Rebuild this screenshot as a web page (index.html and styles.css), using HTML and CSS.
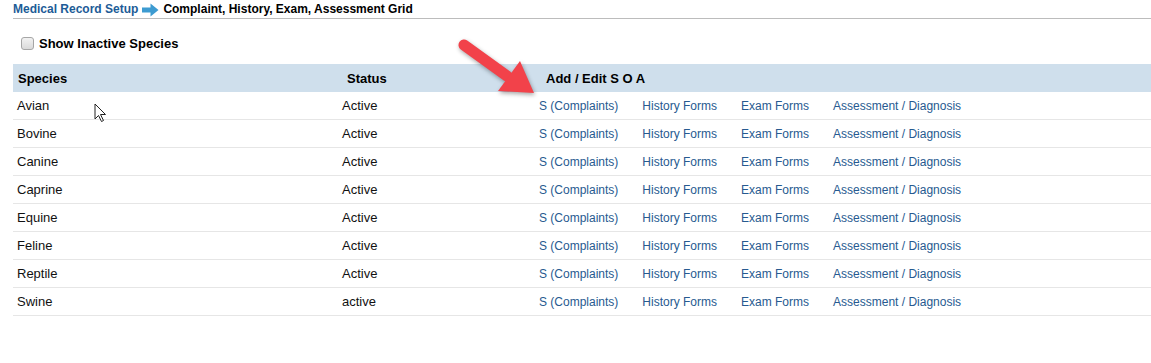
FILE: index.html
```html
<!DOCTYPE html>
<html lang="en">
<head>
  <meta charset="UTF-8" />
  <title>Complaint, History, Exam, Assessment Grid</title>
  <link rel="stylesheet" href="styles.css">
</head>
<body>
  <div class="page">
    <div class="breadcrumb">
      <a href="#" class="crumb-link">Medical Record Setup</a>
      <svg class="crumb-arrow" width="17" height="14" viewBox="0 0 17 14">
        <path d="M0 4.5 H8.5 V0.5 L16.5 7 L8.5 13.5 V9.5 H0 Z" fill="#3d9bd1" />
      </svg>
      <span class="crumb-current">Complaint, History, Exam, Assessment Grid</span>
    </div>

    <div class="options">
      <label class="check-label">
        <input type="checkbox" class="check" />
        Show Inactive Species
      </label>
    </div>

    <table class="grid">
      <colgroup>
        <col class="col-species" />
        <col class="col-status" />
        <col />
      </colgroup>
      <thead>
        <tr>
          <th class="th-species">Species</th>
          <th class="th-status">Status</th>
          <th class="th-soa">Add / Edit S O A</th>
        </tr>
      </thead>
      <tbody id="rows"></tbody>
    </table>
  </div>

  <!-- annotation overlays -->
  <svg class="red-arrow" width="90" height="70" viewBox="0 0 90 70">
    <line x1="7" y1="8" x2="50" y2="39" stroke="#f2424a" stroke-width="11" stroke-linecap="round" />
    <polygon points="41,54 63,24 77,56" fill="#f2424a" />
  </svg>

  <svg class="cursor" width="13" height="20" viewBox="0 0 13 20">
    <path d="M1 1 V16 L4.5 12.5 L7.5 18.5 L9.5 17.5 L6.5 11.5 H11.5 Z" fill="#fff" stroke="#222" stroke-width="1" stroke-linejoin="round" />
  </svg>

  <script>
    const species = [
      ['Avian', 'Active'], ['Bovine', 'Active'], ['Canine', 'Active'], ['Caprine', 'Active'],
      ['Equine', 'Active'], ['Feline', 'Active'], ['Reptile', 'Active'], ['Swine', 'active']
    ];
    const links = ['S (Complaints)', 'History Forms', 'Exam Forms', 'Assessment / Diagnosis'];
    const tbody = document.getElementById('rows');

    species.forEach(([name, status]) => {
      const tr = document.createElement('tr');
      tr.innerHTML =
        `<td class="td-species">${name}</td>` +
        `<td class="td-status">${status}</td>` +
        `<td class="td-soa"><div class="soa-links">` +
        links.map(l => `<a href="#">${l}</a>`).join('') +
        `</div></td>`;
      tbody.appendChild(tr);
    });
  </script>
</body>
</html>
```

FILE: styles.css
```css
body {
  margin: 0;
  padding: 0;
  background: #fff;
  color: #111;
  font-family: 'Liberation Sans', Arial, sans-serif;
  position: relative;
}

a {
  text-decoration: none;
}

.page {
  padding-left: 13px;
}

.breadcrumb {
  height: 18px;
  display: flex;
  align-items: center;
  gap: 4px;
  border-bottom: 1px solid #bcbcbc;
  font-size: 12px;
  font-weight: bold;
}

.crumb-link {
  color: #1d5c97;
}

.crumb-arrow {
  display: block;
  margin-top: 1px;
}

.crumb-current {
  color: #000;
}

.options {
  height: 26px;
  margin: 11px 0 8px;
  padding-left: 8px;
  display: flex;
  align-items: center;
}

.check-label {
  display: flex;
  align-items: center;
  gap: 5px;
  font-size: 13px;
  font-weight: bold;
  color: #000;
}

.check {
  appearance: none;
  -webkit-appearance: none;
  margin: 0;
  width: 13px;
  height: 13px;
  border: 1px solid #a6a6a6;
  border-radius: 3px;
  background: linear-gradient(#f2f2f2, #dadada);
}

.grid {
  width: 1138px;
  border-collapse: collapse;
  font-size: 13px;
}

.col-species { width: 325px; }
.col-status { width: 197px; }

.grid th {
  height: 28px;
  padding: 0;
  background: #cfdfec;
  text-align: left;
  font-weight: bold;
  color: #000;
}

.th-species { padding-left: 5px !important; }
.th-status { padding-left: 9px !important; }
.th-soa { padding-left: 11px !important; }

.grid td {
  height: 27px;
  padding: 0 0 0 4px;
  border-bottom: 1px solid #e6e6e6;
  color: #111;
}

.soa-links {
  display: flex;
  gap: 24px;
  font-size: 12px;
}

.soa-links a {
  color: #275a90;
}

.red-arrow {
  position: absolute;
  left: 457px;
  top: 37px;
  filter: drop-shadow(1px 2px 2px rgba(0, 0, 0, 0.35));
}

.cursor {
  position: absolute;
  left: 94px;
  top: 103px;
}
```
